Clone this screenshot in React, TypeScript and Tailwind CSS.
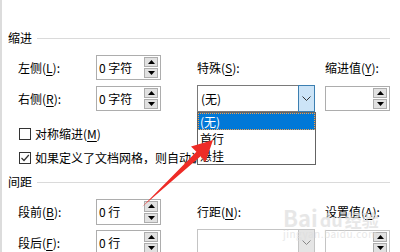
import React from "react"

function Key({ text, k }: { text: string; k: string }) {
  return (
    <span className="whitespace-nowrap">
      {text}(<span className="underline underline-offset-[2px]">{k}</span>):
    </span>
  )
}

function Arrow({ up, color = "#000" }: { up?: boolean; color?: string }) {
  return (
    <svg width="7" height="4" viewBox="0 0 7 4">
      <polygon points={up ? "0,4 7,4 3.5,0" : "0,0 7,0 3.5,4"} fill={color} />
    </svg>
  )
}

function Spin({ value, h = "h-[25px]", light }: { value?: string; h?: string; light?: boolean }) {
  return (
    <div className={`flex ${h} w-[65px] border ${light ? "border-[#c4c4c4]" : "border-[#adadad]"} bg-white`}>
      <div className="flex flex-1 items-center pl-[2px]">{value}</div>
      <div className="flex w-[14px] flex-col gap-[1px] py-[1px] mr-[2px]">
        <div className="flex flex-1 items-center justify-center border border-[#adadad] bg-[#e1e1e1]">
          <Arrow up />
        </div>
        <div className="flex flex-1 items-center justify-center border border-[#adadad] bg-[#e1e1e1]">
          <Arrow />
        </div>
      </div>
    </div>
  )
}

function Combo({ value, active }: { value?: string; active?: boolean }) {
  return (
    <div className={`flex h-[27px] w-[118px] border ${active ? "border-[#7a7a7a]" : "border-[#c4c4c4]"} bg-white`}>
      <div className="flex flex-1 items-center pl-[3px]">{value}</div>
      <div
        className={`-my-[1px] -mr-[1px] flex w-[17px] items-center justify-center border ${
          active ? "border-[#3c7fb1] bg-[#cce4f7]" : "border-[#c4c4c4] bg-[#e5e5e5]"
        }`}
      >
        <svg width="9" height="5" viewBox="0 0 9 5">
          <polyline points="0.5,0.5 4.5,4.5 8.5,0.5" fill="none" stroke={active ? "#333" : "#888"} strokeWidth="1" />
        </svg>
      </div>
    </div>
  )
}

function Check({ checked }: { checked?: boolean }) {
  return (
    <div className="flex h-[12px] w-[12px] shrink-0 items-center justify-center border border-[#333] bg-white">
      {checked && (
        <svg width="10" height="10" viewBox="0 0 10 10">
          <polyline points="1.5,5 4,7.5 8.8,2" fill="none" stroke="#333" strokeWidth="1.2" />
        </svg>
      )}
    </div>
  )
}

function Header({ text }: { text: string }) {
  return (
    <div className="flex h-[16px] items-center pl-[6px] pr-[10px]">
      <span>{text}</span>
      <div className="ml-[5px] h-px flex-1 bg-[#dadada]" />
    </div>
  )
}

export default function App() {
  return (
    <div className="relative h-[252px] w-[400px] overflow-hidden border-l-2 border-[#dcdcdc] bg-white text-[12px] leading-none text-black font-[family-name:'Noto_Sans_CJK_SC','Noto_Sans',sans-serif]">
      <div className="mt-[30px]">
        <Header text="缩进" />
      </div>

      <div className="mt-[9px] flex h-[25px] items-center pl-[16px]">
        <div className="w-[78px]"><Key text="左侧" k="L" /></div>
        <Spin value="0 字符" />
        <div className="w-[36px]" />
        <div className="w-[118px]"><Key text="特殊" k="S" /></div>
        <div className="w-[10px]" />
        <div className="w-[65px]"><Key text="缩进值" k="Y" /></div>
      </div>

      <div className="mt-[6px] flex h-[25px] items-center pl-[16px]">
        <div className="w-[78px]"><Key text="右侧" k="R" /></div>
        <Spin value="0 字符" />
        <div className="w-[36px]" />
        <Combo value="(无)" active />
        <div className="w-[10px]" />
        <Spin />
      </div>

      <div className="mt-[15px] flex h-[16px] items-center gap-[4px] pl-[17px]">
        <Check />
        <span>
          对称缩进(<span className="underline underline-offset-[2px]">M</span>)
        </span>
      </div>

      <div className="mt-[8px] flex h-[16px] items-center gap-[4px] pl-[17px]">
        <Check checked />
        <span className="w-[162px] overflow-hidden whitespace-nowrap">
          如果定义了文档网格，则自动调整右缩进(<span className="underline underline-offset-[2px]">D</span>)
        </span>
      </div>

      <div className="mt-[8px]">
        <Header text="间距" />
      </div>

      <div className="mt-[9px] flex h-[26px] items-center pl-[16px]">
        <div className="w-[78px]"><Key text="段前" k="B" /></div>
        <Spin value="0 行" h="h-[26px]" />
        <div className="w-[36px]" />
        <div className="w-[118px]"><Key text="行距" k="N" /></div>
        <div className="w-[10px]" />
        <div className="w-[65px]"><Key text="设置值" k="A" /></div>
      </div>

      <div className="mt-[4px] flex h-[27px] items-center pl-[16px]">
        <div className="w-[78px]"><Key text="段后" k="F" /></div>
        <Spin value="0 行" />
        <div className="w-[36px]" />
        <Combo />
        <div className="w-[10px]" />
        <Spin light />
      </div>

      {/* open dropdown of 特殊 */}
      <div className="absolute left-[195px] top-[112px] flex h-[53px] w-[119px] flex-col border border-[#646464] bg-white">
        <div className="flex h-[17px] items-center border border-dotted border-[#f5a04a] bg-[#0078d7] pl-[1px] text-white">(无)</div>
        <div className="flex h-[17px] items-center pl-[2px]">首行</div>
        <div className="flex h-[17px] items-center pl-[2px]">悬挂</div>
      </div>

      {/* watermark */}
      <div className="pointer-events-none absolute left-[281px] top-[206px] flex flex-col text-[#dedede] opacity-70">
        <div className="flex items-end gap-[2px] font-bold">
          <span className="text-[22px]">Bai</span>
          <span className="text-[18px]">du</span>
          <span className="text-[17px]">经验</span>
        </div>
        <span className="mt-[1px] text-[10px] tracking-[0.5px]">jingyan.baidu.com</span>
      </div>

      {/* red arrow */}
      <svg className="pointer-events-none absolute -left-[2px] top-0" width="400" height="252" viewBox="0 0 400 252">
        <polygon points="142,207 196.4,151.8 191,146.5 213,140 205.5,162 200.6,156.2" fill="#ee2b26" />
      </svg>
    </div>
  )
}
